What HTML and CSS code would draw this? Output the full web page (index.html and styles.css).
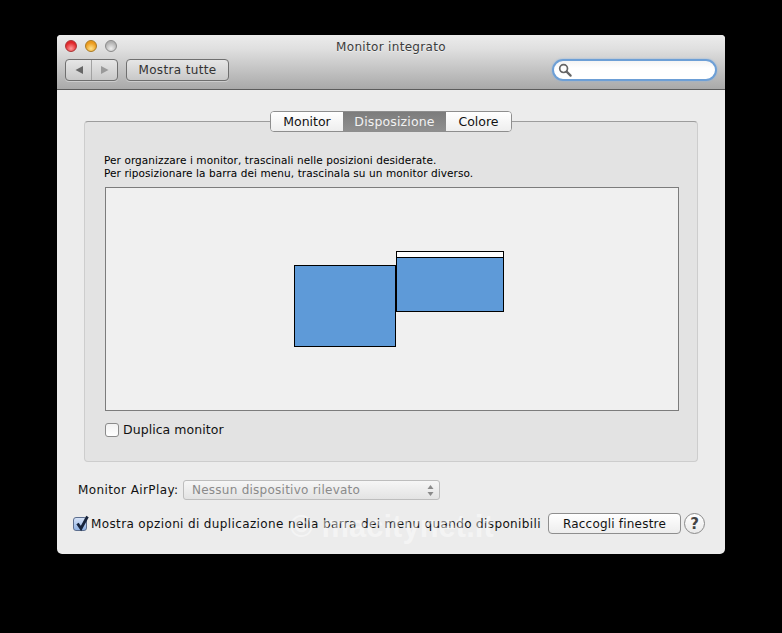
FILE: index.html
```html
<!DOCTYPE html>
<html lang="it">
<head>
<meta charset="utf-8">
<title>Monitor integrato</title>
<link rel="stylesheet" href="styles.css">
</head>
<body>
<div class="window">
  <header class="toolbar">
    <div class="titlerow">
      <div class="lights">
        <span class="light red"></span>
        <span class="light yellow"></span>
        <span class="light grey"></span>
      </div>
      <div class="title">Monitor integrato</div>
    </div>
    <div class="toolrow">
      <div class="navgroup">
        <span class="navbtn"><svg width="12" height="12" viewBox="0 0 12 12"><path d="M10 2V10L2.5 6Z" fill="#666"/></svg></span>
        <span class="navbtn second"><svg width="12" height="12" viewBox="0 0 12 12"><path d="M2 2V10L9.5 6Z" fill="#9a9a9a"/></svg></span>
      </div>
      <button class="btn showall">Mostra tutte</button>
      <div class="search">
        <svg width="14" height="14" viewBox="0 0 14 14"><circle cx="5.6" cy="5.6" r="3.9" fill="none" stroke="#666" stroke-width="1.7"/><path d="M8.6 8.6L12.6 12.6" stroke="#666" stroke-width="2.2" stroke-linecap="round"/></svg>
      </div>
    </div>
  </header>
  <main class="content">
    <section class="panel">
      <div class="tabs">
        <span class="tab first">Monitor</span>
        <span class="tab active">Disposizione</span>
        <span class="tab last">Colore</span>
      </div>
      <p class="help">Per organizzare i monitor, trascinali nelle posizioni desiderate.<br>Per riposizionare la barra dei menu, trascinala su un monitor diverso.</p>
      <div class="canvas">
        <div class="screen left"></div>
        <div class="screen right"><div class="menubar"></div></div>
      </div>
      <label class="check dup"><span class="box"></span>Duplica monitor</label>
    </section>
    <div class="airplay">
      <span class="airlabel">Monitor AirPlay:</span>
      <div class="select">
        <span>Nessun dispositivo rilevato</span>
        <svg width="7" height="13" viewBox="0 0 7 13"><path d="M3.5 1L6.5 5H.5Z" fill="#8a8a8a"/><path d="M3.5 12L6.5 8H.5Z" fill="#8a8a8a"/></svg>
      </div>
    </div>
    <div class="bottom">
      <label class="check mirror">
        <span class="box on"><svg width="18" height="18" viewBox="0 0 18 18"><path d="M4.5 8.5L8 13.5L14.5 1.5" fill="none" stroke="#16233b" stroke-width="2.8"/></svg></span>
        <span class="mirrortext">Mostra opzioni di duplicazione nella barra dei menu quando disponibili</span>
      </label>
      <button class="btn gather">Raccogli finestre</button>
      <span class="helpbtn">?</span>
    </div>
  </main>
  <div class="watermark">© macitynet.it</div>
</div>
</body>
</html>
```
FILE: styles.css
```css
* { box-sizing: border-box; }
html, body { margin: 0; height: 100%; background: #000; overflow: hidden; }
body { padding: 35px 0 0 57px; font-family: "DejaVu Sans", sans-serif; font-size: 12px; color: #111; }

.window {
  position: relative;
  width: 668px;
  height: 519px;
  background: #ececec;
  border-radius: 4px 4px 5px 5px;
  overflow: hidden;
}

.toolbar {
  height: 55px;
  background: linear-gradient(#ececec, #e0e0e0 25%, #a9a9a9);
  border-bottom: 1px solid #5c5c5c;
  padding: 0 8px;
}
.titlerow { position: relative; height: 24px; display: flex; align-items: center; justify-content: center; }
.title { font-size: 12px; letter-spacing: .32px; color: #3c3c3c; text-shadow: 0 1px 0 rgba(255,255,255,.5); }
.lights { position: absolute; left: 0; top: 5px; display: flex; gap: 8px; }
.light { width: 12px; height: 12px; border-radius: 50%; border: 1px solid #777; }
.red { background: radial-gradient(circle at 50% 75%, #ff9a9a, #e0262a 65%); border-color: #a33; }
.yellow { background: radial-gradient(circle at 50% 75%, #ffe28a, #eb9a1c 65%); border-color: #a97a22; }
.grey { background: radial-gradient(circle at 50% 75%, #eee, #b0b0b0 70%); border-color: #8a8a8a; }

.toolrow { display: flex; align-items: flex-start; }
.navgroup, .btn.showall {
  height: 22px;
  border: 1px solid #6f6f6f;
  border-radius: 4px;
  background: linear-gradient(#e6e6e6, #c8c8c8);
  box-shadow: 0 1px 0 rgba(255,255,255,.35);
}
.navgroup { width: 53px; display: flex; margin-right: 8px; }
.navbtn { flex: 1; display: flex; align-items: center; justify-content: center; }
.navbtn.second { border-left: 1px solid #a2a2a2; }
.btn { font-family: inherit; font-size: 12px; padding: 0; }
.btn.showall { width: 103px; color: #333; letter-spacing: .35px; }

.search {
  margin-left: auto;
  width: 165px;
  height: 22px;
  border-radius: 11px;
  background: linear-gradient(#f4f4f4, #fff 40%);
  border: 2px solid #6d9fd6;
  box-shadow: 0 0 2px #8ab4e0;
  display: flex;
  align-items: center;
  padding-left: 4px;
}

.content { padding: 31px 27px 0 27px; }

.panel {
  position: relative;
  height: 341px;
  background: #e3e3e3;
  border: 1px solid #cdcdcd;
  border-top-color: #9c9c9c;
  border-radius: 4px;
  padding: 32px 19px 0 20px;
}

.tabs {
  position: absolute;
  left: 185px;
  top: -11px;
  width: 242px;
  height: 21px;
  display: flex;
  background: #fff;
  border: 1px solid #8e8e8e;
  border-radius: 4px;
  overflow: hidden;
}
.tab {
  display: flex;
  align-items: center;
  justify-content: center;
  font-size: 12.5px;
  color: #111;
  background: linear-gradient(#fff, #eee);
}
.tab.first { width: 72px; }
.tab.active {
  width: 103px;
  background: linear-gradient(#7c7c7c, #8f8f8f);
  color: #f2f2f2;
  letter-spacing: .15px;
}
.tab.last { flex: 1; }

.help { margin: 0 0 7px -1px; font-size: 10.5px; line-height: 13px; letter-spacing: .08px; color: #000; }

.canvas {
  position: relative;
  width: 574px;
  height: 224px;
  background: #f0f0f0;
  border: 1px solid #7c7c7c;
}
.screen { position: absolute; background: #5e9ad8; border: 1px solid #000; }
.screen.left { left: 188px; top: 77px; width: 102px; height: 82px; }
.screen.right { left: 290px; top: 63px; width: 108px; height: 61px; }
.menubar { height: 6px; background: #fff; border-bottom: 1px solid #000; }

.check { display: flex; align-items: center; white-space: nowrap; }
.box {
  position: relative;
  flex: none;
  width: 14px;
  height: 14px;
  border: 1px solid #8b8b8b;
  border-radius: 3px;
  background: linear-gradient(#f2f2f2, #fff);
  margin-right: 4px;
}
.dup { margin-top: 11px; font-size: 12.5px; letter-spacing: .05px; }

.airplay { display: flex; align-items: center; margin: 18px 0 0 -6px; }
.airlabel { width: 105px; font-size: 12px; letter-spacing: .4px; white-space: nowrap; }
.select {
  width: 257px;
  height: 20px;
  border: 1px solid #bdbdbd;
  border-radius: 3px;
  background: linear-gradient(#f6f6f6, #e3e3e3);
  display: flex;
  align-items: center;
  justify-content: space-between;
  padding: 0 5px 0 8px;
  color: #8a8a8a;
  font-size: 12px;
  letter-spacing: .25px;
}

.bottom { display: flex; align-items: center; margin: 13px -8px 0 -11px; height: 21px; }
.mirror { flex: none; width: 475px; font-size: 12px; letter-spacing: .37px; }
.box.on {
  background: linear-gradient(#d6e2f6, #8fb2e4);
  border-color: #5d6f8f;
}
.box.on svg { position: absolute; left: -1px; top: -3px; }
.btn.gather {
  flex: none;
  width: 133px;
  height: 21px;
  border: 1px solid #8e8e8e;
  border-radius: 4px;
  background: linear-gradient(#fff, #ededed);
  color: #111;
  letter-spacing: .2px;
}
.helpbtn {
  flex: none;
  width: 21px;
  height: 21px;
  margin-left: 3px;
  border: 1px solid #8a8a8a;
  border-radius: 50%;
  background: linear-gradient(#fff, #e9e9e9);
  display: flex;
  align-items: center;
  justify-content: center;
  font-size: 15px;
  font-weight: bold;
  color: #444;
}

.watermark {
  position: absolute;
  left: 233px;
  top: 474px;
  font-family: "Liberation Sans", sans-serif;
  font-size: 31px;
  font-weight: bold;
  color: rgba(255,255,255,.45);
  pointer-events: none;
  white-space: nowrap;
}
```
